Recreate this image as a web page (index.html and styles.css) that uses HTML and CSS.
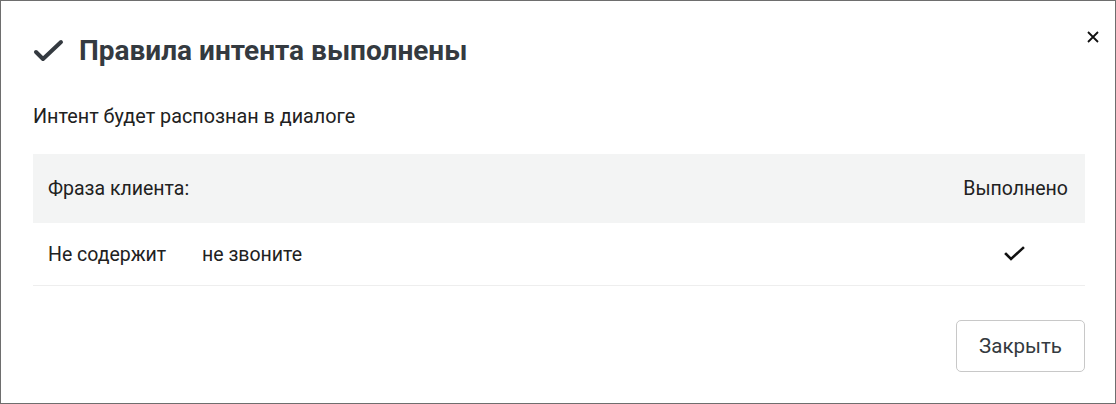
FILE: index.html
```html
<!DOCTYPE html>
<html lang="ru">
<head>
<meta charset="utf-8">
<link rel="stylesheet" href="styles.css">
</head>
<body>
<div class="modal">
  <button class="close" aria-label="Закрыть">
    <svg width="12" height="12" viewBox="0 0 12 12"><path d="M1 1L11 11M11 1L1 11" stroke="#111" stroke-width="1.8" fill="none"/></svg>
  </button>
  <div class="header">
    <svg class="title-icon" width="32" height="26" viewBox="0 0 32 26"><polyline points="3,14 10,21 28,4" fill="none" stroke="#343a40" stroke-width="4" stroke-linecap="round" stroke-linejoin="round"/></svg>
    <h1 class="title">Правила интента выполнены</h1>
  </div>
  <p class="subtitle">Интент будет распознан в диалоге</p>
  <div class="table">
    <div class="thead">
      <span>Фраза клиента:</span>
      <span>Выполнено</span>
    </div>
    <div class="trow">
      <div class="cond">
        <span class="cond-type">Не содержит</span>
        <span class="cond-value">не звоните</span>
      </div>
      <div class="status">
        <svg width="22" height="16" viewBox="0 0 22 16"><polyline points="2,8 7,13 19,2" fill="none" stroke="#111" stroke-width="2.6" stroke-linecap="square"/></svg>
      </div>
    </div>
  </div>
  <div class="footer">
    <button class="btn">Закрыть</button>
  </div>
</div>
</body>
</html>
```
FILE: styles.css
```css
html, body {
  margin: 0;
  padding: 0;
  background: #fff;
}
body {
  font-family: Roboto, "Noto Sans", sans-serif;
  color: #212121;
}
.modal {
  position: relative;
  box-sizing: border-box;
  width: 1116px;
  height: 404px;
  border: 1px solid #6e6e6e;
  padding: 0 30px 0 32px;
}
.close {
  position: absolute;
  top: 29px;
  right: 15px;
  width: 14px;
  height: 14px;
  padding: 0;
  border: 0;
  background: none;
  display: flex;
  align-items: center;
  justify-content: center;
}
.header {
  display: flex;
  align-items: center;
  height: 98px;
}
.title-icon {
  margin-right: 14px;
  margin-top: 2px;
}
.title {
  margin: 0;
  font-size: 28px;
  font-weight: 700;
  color: #343a40;
}
.subtitle {
  margin: 0;
  font-size: 19.8px;
  line-height: 36px;
  height: 55px;
}
.table {
  font-size: 19.5px;
}
.thead {
  display: flex;
  justify-content: space-between;
  align-items: center;
  height: 69px;
  background: #f3f4f4;
  padding: 0 17px 0 15px;
}
.trow {
  display: flex;
  justify-content: space-between;
  align-items: center;
  height: 62px;
  border-bottom: 1px solid #eeeeee;
  padding-left: 15px;
}
.cond {
  display: flex;
}
.cond-type {
  width: 154px;
}
.status {
  width: 140px;
  display: flex;
  justify-content: center;
}
.footer {
  display: flex;
  justify-content: flex-end;
  padding-top: 34px;
}
.btn {
  width: 129px;
  height: 52px;
  box-sizing: border-box;
  background: #fff;
  border: 1px solid #c8c8c8;
  border-radius: 5px;
  font-family: Roboto, "Noto Sans", sans-serif;
  font-size: 20.5px;
  color: #343a40;
}
```
